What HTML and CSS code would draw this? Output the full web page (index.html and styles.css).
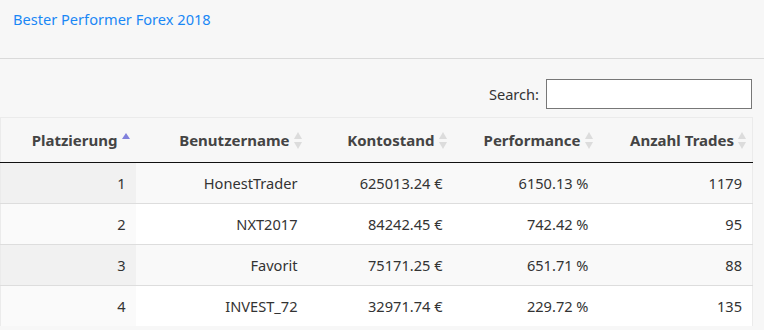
FILE: index.html
```html
<!DOCTYPE html>
<html lang="de">
<head>
<meta charset="utf-8">
<title>Bester Performer Forex 2018</title>
<link rel="stylesheet" href="styles.css">
</head>
<body>
<header class="topbar">
  <a class="title" href="#">Bester Performer Forex 2018</a>
</header>
<main class="content">
  <div class="search-row">
    <label class="search-label">Search: <input class="search-input" type="search"></label>
  </div>
  <table class="ranking">
    <thead>
      <tr>
        <th class="c1 sorted">Platzierung<span class="sort asc"></span></th>
        <th class="c2">Benutzername<span class="sort both"></span></th>
        <th class="c3">Kontostand<span class="sort both"></span></th>
        <th class="c4">Performance<span class="sort both"></span></th>
        <th class="c5">Anzahl Trades<span class="sort both"></span></th>
      </tr>
    </thead>
    <tbody>
      <tr class="odd"><td class="s">1</td><td>HonestTrader</td><td>625013.24 €</td><td>6150.13 %</td><td>1179</td></tr>
      <tr class="even"><td class="s">2</td><td>NXT2017</td><td>84242.45 €</td><td>742.42 %</td><td>95</td></tr>
      <tr class="odd"><td class="s">3</td><td>Favorit</td><td>75171.25 €</td><td>651.71 %</td><td>88</td></tr>
      <tr class="even"><td class="s">4</td><td>INVEST_72</td><td>32971.74 €</td><td>229.72 %</td><td>135</td></tr>
    </tbody>
  </table>
</main>
</body>
</html>
```
FILE: styles.css
```css
html, body {
  margin: 0;
  padding: 0;
  background: #f7f7f7;
  font-family: "Noto Sans", "Open Sans", sans-serif;
  font-size: 14.6px;
  color: #333;
}
.topbar {
  height: 59px;
  border-bottom: 1px solid #dadada;
  box-sizing: border-box;
  padding: 9px 13px 0;
}
.title {
  color: #1a87f5;
  text-decoration: none;
  font-size: 14.6px;
  line-height: 20px;
}
.content {
  padding: 20px 11px 0 0;
  width: 764px;
  box-sizing: border-box;
}
.search-row {
  display: flex;
  justify-content: flex-end;
  height: 38px;
  padding-right: 1px;
}
.search-label {
  display: flex;
  align-items: center;
  gap: 7px;
  height: 30px;
  color: #333;
}
.search-input {
  width: 206px;
  height: 30px;
  box-sizing: border-box;
  border: 1px solid #777;
  background: #fff;
  margin: 0;
  padding: 2px 4px;
  font: inherit;
}
.ranking {
  width: 753px;
  border-collapse: collapse;
  border: 1px solid #ebebeb;
  border-bottom: none;
  table-layout: fixed;
}
.ranking th, .ranking td {
  text-align: right;
  white-space: nowrap;
}
.ranking th {
  height: 45px;
  padding: 0 18px 0 10px;
  box-sizing: border-box;
  font-size: 15px;
  font-weight: bold;
  color: #444;
  background: #f7f7f7;
  border-bottom: 1px solid #111;
  position: relative;
}
.c1 { width: 135px; }
.c2 { width: 172px; }
.c3 { width: 145px; }
.c4 { width: 146px; }
.ranking td {
  height: 40px;
  padding: 0 10px;
  border-top: 1px solid #ddd;
  color: #333;
}
.ranking tbody tr:first-child td { border-top: none; }
.odd td { background: #f9f9f9; }
.even td { background: #fff; }
.odd td.s { background: #f1f1f1; }
.even td.s { background: #fafafa; }
.sort {
  position: absolute;
  right: 5px;
  top: 50%;
  width: 9px;
  height: 17px;
  margin-top: -8px;
}
.sort.both::before, .sort.both::after, .sort.asc::before {
  content: "";
  position: absolute;
  left: 0;
  border-left: 4.5px solid transparent;
  border-right: 4.5px solid transparent;
}
.sort.both::before {
  top: 0;
  border-bottom: 7px solid #dcdcdc;
}
.sort.both::after {
  bottom: 0;
  border-top: 7px solid #dcdcdc;
}
.sort.asc::before {
  top: 1px;
  border-bottom: 6px solid #8181dc;
}
```
